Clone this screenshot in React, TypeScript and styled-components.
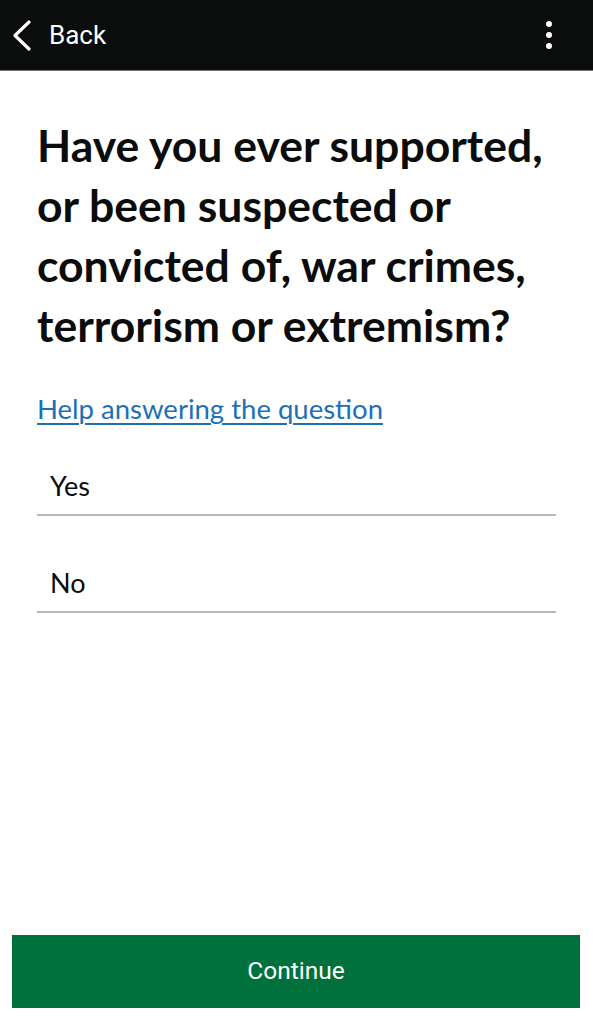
import styled, { createGlobalStyle } from 'styled-components'

const GlobalStyle = createGlobalStyle`
  html, body {
    margin: 0;
    padding: 0;
    background: #fff;
  }
  body {
    font-family: Lato, "Noto Sans", sans-serif;
    color: #0b0c0c;
  }
`

const options = ['Yes', 'No']

const App = () => {
  return (
    <Page>
      <GlobalStyle />
      <TopBar>
        <BackButton type="button">
          <svg width="20" height="31" viewBox="0 0 20 31" fill="none">
            <path d="M17 2 L3 15.5 L17 29" stroke="#fff" strokeWidth="3.2" strokeLinecap="round" strokeLinejoin="round" />
          </svg>
          <BackLabel>Back</BackLabel>
        </BackButton>
        <MenuButton type="button" aria-label="More options">
          <svg width="8" height="30" viewBox="0 0 8 30">
            <circle cx="4" cy="4" r="3" fill="#fff" />
            <circle cx="4" cy="15" r="3" fill="#fff" />
            <circle cx="4" cy="26" r="3" fill="#fff" />
          </svg>
        </MenuButton>
      </TopBar>

      <Main>
        <Heading>Have you ever supported, or been suspected or convicted of, war crimes, terrorism or extremism?</Heading>
        <HelpLink href="#">Help answering the question</HelpLink>
        <OptionList>
          {options.map((option) => (
            <Option key={option}>{option}</Option>
          ))}
        </OptionList>
      </Main>

      <Footer>
        <ContinueButton type="button">Continue</ContinueButton>
      </Footer>
    </Page>
  )
}

export default App

const Page = styled.div({
  display: 'flex',
  flexDirection: 'column',
  minHeight: '100vh',
  width: 593,
  boxSizing: 'border-box'
})
const TopBar = styled.header({
  height: 70,
  background: '#0b0c0c',
  borderBottom: '1px solid #6f7273',
  display: 'flex',
  alignItems: 'center',
  justifyContent: 'space-between',
  padding: '0 40px 0 12px'
})
const BackButton = styled.button({
  display: 'flex',
  alignItems: 'center',
  gap: 17,
  background: 'none',
  border: 'none',
  padding: 0,
  cursor: 'pointer'
})
const BackLabel = styled.span({
  fontFamily: 'Roboto, sans-serif',
  fontSize: 26,
  color: '#fff'
})
const MenuButton = styled.button({
  display: 'flex',
  background: 'none',
  border: 'none',
  padding: 0,
  cursor: 'pointer'
})
const Main = styled.main({
  flex: 1,
  display: 'flex',
  flexDirection: 'column',
  alignItems: 'flex-start',
  padding: '0 37px'
})
const Heading = styled.h1({
  fontSize: 44.5,
  lineHeight: '60px',
  fontWeight: 700,
  margin: '44px 0 0'
})
const HelpLink = styled.a({
  marginTop: 37,
  fontSize: 27.5,
  lineHeight: '33px',
  color: '#1d70b8',
  textDecoration: 'underline',
  textDecorationThickness: 1.5,
  textUnderlineOffset: 4
})
const OptionList = styled.div({
  alignSelf: 'stretch',
  display: 'flex',
  flexDirection: 'column',
  gap: 37,
  marginTop: 31
})
const Option = styled.div({
  fontSize: 27,
  lineHeight: '32px',
  padding: '14px 13px 12px',
  borderBottom: '2px solid #b8b9ba'
})
const Footer = styled.footer({
  padding: '0 13px 16px 12px'
})
const ContinueButton = styled.button({
  width: '100%',
  height: 73,
  paddingBottom: 4,
  background: '#00703c',
  border: 'none',
  color: '#fff',
  fontFamily: 'Roboto, sans-serif',
  fontSize: 24.5,
  cursor: 'pointer'
})
